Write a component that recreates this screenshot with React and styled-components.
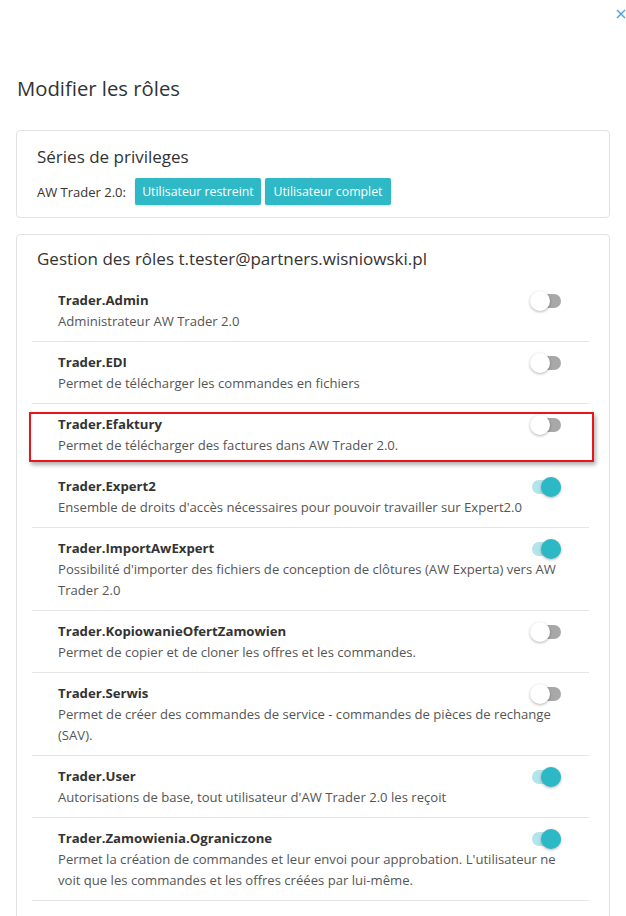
import React from 'react';
import styled, { createGlobalStyle } from 'styled-components';

const GlobalStyle = createGlobalStyle`
  body {
    margin: 0;
    background: #fff;
    font-family: "Segoe UI", "Open Sans", "Noto Sans", sans-serif;
    color: #333;
  }
`;

const Page = styled.div`
  width: 626px;
  box-sizing: border-box;
  padding: 0 16px 40px;
`;

const CloseRow = styled.div`
  height: 28px;
  display: flex;
  justify-content: flex-end;
  align-items: center;
  margin-right: -16px;
`;

const CloseButton = styled.button`
  border: 0;
  background: none;
  padding: 0;
  width: 10px;
  height: 10px;
  display: flex;
  cursor: pointer;
`;

const Title = styled.h2`
  margin: 46px 0 28px 1px;
  font-size: 20.3px;
  line-height: 28px;
  font-weight: 400;
  color: #333;
`;

const Card = styled.div`
  border: 1px solid #e2e2e2;
  border-radius: 4px;
  padding: ${(p) => p.$padding || '14px 20px 12px'};
  margin-bottom: 16px;
`;

const CardTitle = styled.div`
  font-size: 17px;
  line-height: 24px;
  color: #333;
  margin-left: ${(p) => p.$indent || '0'};
`;

const PresetRow = styled.div`
  display: flex;
  align-items: center;
  gap: 4px;
  margin-top: 9px;
  font-size: 13px;
  color: #333;
`;

const PresetLabel = styled.span`
  margin-right: 5px;
`;

const PresetButton = styled.button`
  height: 27px;
  width: 126px;
  padding: 0;
  border: 0;
  border-radius: 2px;
  background: #2fb9c7;
  color: #fff;
  font-family: inherit;
  font-size: 12.3px;
  box-shadow: 0 1px 2px rgba(0, 0, 0, 0.15);
  cursor: pointer;
`;

const RoleList = styled.div`
  margin-top: 9px;
`;

const RoleItem = styled.div`
  position: relative;
  padding: 10px 28px 9px 26px;
  border-bottom: 1px solid ${(p) => (p.$highlight ? 'transparent' : '#e4e4e4')};

  ${(p) =>
    p.$highlight &&
    `
    &::after {
      content: '';
      position: absolute;
      top: 8px;
      bottom: 3px;
      left: -3px;
      right: -5px;
      border: 2px solid #e8161b;
      box-shadow: 2px 3px 4px rgba(0, 0, 0, 0.3);
      pointer-events: none;
    }
  `}
`;

const RoleHead = styled.div`
  display: flex;
  justify-content: space-between;
  align-items: center;
  height: 21px;
`;

const RoleName = styled.div`
  font-size: 13.2px;
  line-height: 21px;
  font-weight: 700;
  color: #333;
`;

const RoleDesc = styled.div`
  font-size: 13.1px;
  line-height: 21px;
  color: #555;
`;

const Switch = styled.span`
  position: relative;
  flex: none;
  width: 31px;
  height: 20px;
`;

const Track = styled.span`
  position: absolute;
  left: 2px;
  top: 3px;
  width: 29px;
  height: 14px;
  border-radius: 7px;
  background: ${(p) => (p.$on ? '#b3e4e9' : '#a8a8a8')};
`;

const Knob = styled.span`
  position: absolute;
  top: 0;
  left: ${(p) => (p.$on ? '11px' : '0')};
  width: 20px;
  height: 20px;
  border-radius: 50%;
  background: ${(p) => (p.$on ? '#2db8c6' : '#fff')};
  box-shadow: 0 1px 3px rgba(0, 0, 0, 0.3);
`;

const roles = [
  { name: 'Trader.Admin', desc: 'Administrateur AW Trader 2.0', on: false },
  { name: 'Trader.EDI', desc: 'Permet de télécharger les commandes en fichiers', on: false },
  {
    name: 'Trader.Efaktury',
    desc: 'Permet de télécharger des factures dans AW Trader 2.0.',
    on: false,
    highlight: true,
  },
  {
    name: 'Trader.Expert2',
    desc: "Ensemble de droits d'accès nécessaires pour pouvoir travailler sur Expert2.0",
    on: true,
  },
  {
    name: 'Trader.ImportAwExpert',
    desc: "Possibilité d'importer des fichiers de conception de clôtures (AW Experta) vers AW Trader 2.0",
    on: true,
  },
  {
    name: 'Trader.KopiowanieOfertZamowien',
    desc: 'Permet de copier et de cloner les offres et les commandes.',
    on: false,
  },
  {
    name: 'Trader.Serwis',
    desc: 'Permet de créer des commandes de service - commandes de pièces de rechange (SAV).',
    on: false,
  },
  {
    name: 'Trader.User',
    desc: "Autorisations de base, tout utilisateur d'AW Trader 2.0 les reçoit",
    on: true,
  },
  {
    name: 'Trader.Zamowienia.Ograniczone',
    desc: "Permet la création de commandes et leur envoi pour approbation. L'utilisateur ne voit que les commandes et les offres créées par lui-même.",
    on: true,
  },
];

const Toggle = ({ on }) => (
  <Switch role="switch" aria-checked={on}>
    <Track $on={on} />
    <Knob $on={on} />
  </Switch>
);

const App = () => {
  return (
    <Page>
      <GlobalStyle />
      <CloseRow>
        <CloseButton aria-label="Fermer">
          <svg width="10" height="10" viewBox="0 0 10 10">
            <path d="M1 1 L9 9 M9 1 L1 9" stroke="#3f9de3" strokeWidth="1.3" fill="none" />
          </svg>
        </CloseButton>
      </CloseRow>
      <Title>Modifier les rôles</Title>

      <Card>
        <CardTitle>Séries de privileges</CardTitle>
        <PresetRow>
          <PresetLabel>AW Trader 2.0:</PresetLabel>
          <PresetButton>Utilisateur restreint</PresetButton>
          <PresetButton>Utilisateur complet</PresetButton>
        </PresetRow>
      </Card>

      <Card $padding="12px 20px 24px 15px">
        <CardTitle $indent="5px">Gestion des rôles t.tester@partners.wisniowski.pl</CardTitle>
        <RoleList>
          {roles.map((r) => (
            <RoleItem key={r.name} $highlight={r.highlight}>
              <RoleHead>
                <RoleName>{r.name}</RoleName>
                <Toggle on={r.on} />
              </RoleHead>
              <RoleDesc>{r.desc}</RoleDesc>
            </RoleItem>
          ))}
        </RoleList>
      </Card>
    </Page>
  );
};

export default App;
